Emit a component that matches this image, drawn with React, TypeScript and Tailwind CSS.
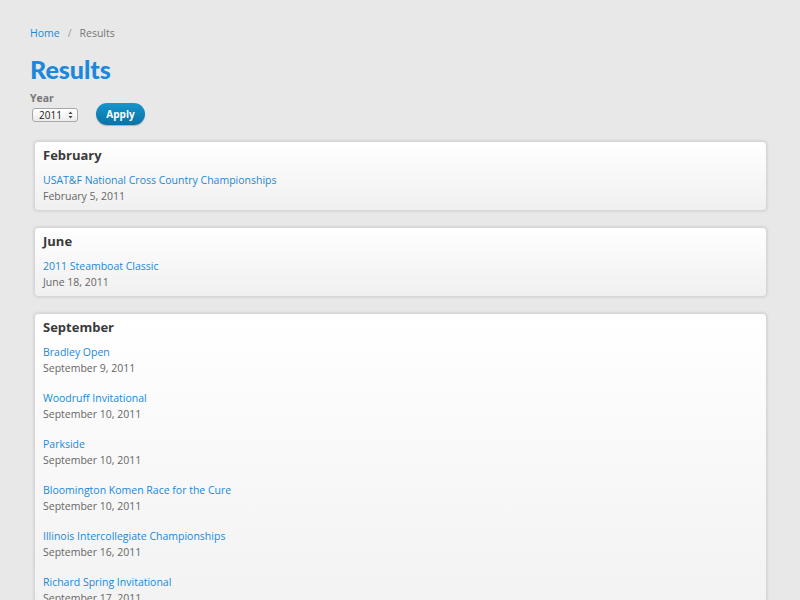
import React from "react";

type Ev = { name: string; date: string };
const months: { month: string; events: Ev[] }[] = [
  { month: "February", events: [{ name: "USAT&F National Cross Country Championships", date: "February 5, 2011" }] },
  { month: "June", events: [{ name: "2011 Steamboat Classic", date: "June 18, 2011" }] },
  {
    month: "September",
    events: [
      { name: "Bradley Open", date: "September 9, 2011" },
      { name: "Woodruff Invitational", date: "September 10, 2011" },
      { name: "Parkside", date: "September 10, 2011" },
      { name: "Bloomington Komen Race for the Cure", date: "September 10, 2011" },
      { name: "Illinois Intercollegiate Championships", date: "September 16, 2011" },
      { name: "Richard Spring Invitational", date: "September 17, 2011" },
      { name: "Loyola Lakefront Invitational", date: "September 24, 2011" },
    ],
  },
];

export default function App() {
  return (
    <div
      className="min-h-[600px] w-full bg-[#e8e8e8] px-[30px] pt-[26px] pb-10 text-[10.5px]"
      style={{ fontFamily: '"Open Sans", "DejaVu Sans", sans-serif' }}
    >
      <div className="flex items-center h-[16px] text-[10.5px]">
        <a className="text-[#1a8ad8]">Home</a>
        <span className="text-[#999] ml-[8px]">/</span>
        <span className="text-[#777] ml-[8px]">Results</span>
      </div>
      <h1
        className="mt-[12px] text-[25px] leading-[30px] font-black text-[#1a88de]"
        style={{ fontFamily: 'Lato, "Open Sans", sans-serif' }}
      >
        Results
      </h1>
      <div className="mt-[8px] flex items-start">
        <div className="flex flex-col">
          <label className="text-[10.5px] font-bold text-[#777] leading-[12px]">Year</label>
          <div className="mt-[4px] ml-[2px] flex items-center justify-between w-[46px] h-[14px] border border-[#a8a8a8] rounded-[3px] bg-gradient-to-b from-white to-[#ececec] pl-[6px] pr-[4px] text-[10px] text-[#222] leading-none">
            <span>2011</span>
            <svg width="5" height="8" viewBox="0 0 5 8">
              <path d="M2.5 0.5 L4.5 3 L0.5 3 Z" fill="#444" />
              <path d="M2.5 7.5 L4.5 5 L0.5 5 Z" fill="#444" />
            </svg>
          </div>
        </div>
        <button className="ml-[18px] mt-[11px] w-[49px] h-[22px] rounded-full bg-gradient-to-b from-[#1596cc] to-[#0a72a6] text-white text-[10px] font-bold shadow-[0_1px_1px_rgba(0,0,0,0.25)]">
          Apply
        </button>
      </div>
      <div className="mt-[16px] ml-[4px] mr-[3px] flex flex-col gap-[16px]">
        {months.map((m) => (
          <div
            key={m.month}
            className="rounded-[4px] border border-[#d6d6d6] bg-gradient-to-b from-white to-[#f0f0f0] shadow-[0_0_3px_rgba(0,0,0,0.15)] px-[8px] pt-[5px] pb-[6px]"
          >
            <h2 className="text-[13px] font-bold text-[#3a3a3a] leading-[16px]">{m.month}</h2>
            <div className="mt-[9px] flex flex-col gap-[14px]">
              {m.events.map((e, i) => (
                <div key={i} className="flex flex-col">
                  <a className="text-[#1a88d8] leading-[16px]">{e.name}</a>
                  <span className="text-[#666] leading-[16px]">{e.date}</span>
                </div>
              ))}
            </div>
          </div>
        ))}
      </div>
    </div>
  );
}
